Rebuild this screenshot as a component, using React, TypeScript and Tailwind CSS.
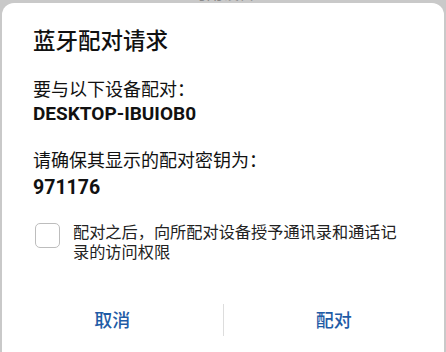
import React from "react";

export default function App() {
  const font = { fontFamily: 'Roboto, "Noto Sans CJK SC", sans-serif' };
  return (
    <div className="w-[446px] h-[352px] bg-[#c9c9c9] overflow-hidden" style={font}>
      <div className="h-[3px] overflow-hidden text-center">
        <div className="-mt-[14px] text-[16px] leading-[16px] text-[#8a8a8a]">可用设备</div>
      </div>
      <div className="mx-[2px] h-[360px] bg-white rounded-[12px] px-[31px] pt-[23px] text-[#111]">
        <div className="text-[22.5px] leading-[30px] font-medium">蓝牙配对请求</div>
        <div className="mt-[22px] text-[18px] leading-[24px]">要与以下设备配对：</div>
        <div className="text-[19px] leading-[24px] font-bold">DESKTOP-IBUIOB0</div>
        <div className="mt-[23px] text-[18px] leading-[24px]">请确保其显示的配对密钥为：</div>
        <div className="mt-[3px] text-[19.5px] leading-[24px] font-bold">971176</div>
        <div className="mt-[23px] flex items-start">
          <div className="ml-[2px] w-[25px] h-[25px] shrink-0 rounded-[5px] border-[1.5px] border-[#bdbdbd]" />
          <div className="ml-[13px] w-[332px] text-[16.2px] leading-[20px] text-[#222]">
            配对之后，向所配对设备授予通讯录和通话记录的访问权限
          </div>
        </div>
        <div className="-mx-[31px] mt-[41px] flex items-center h-[32px]">
          <div className="flex-1 text-center text-[18px] text-[#1f5ca6] font-medium">取消</div>
          <div className="w-px h-[32px] bg-[#dddddd]" />
          <div className="flex-1 text-center text-[18px] text-[#1f5ca6] font-medium">配对</div>
        </div>
      </div>
    </div>
  );
}
